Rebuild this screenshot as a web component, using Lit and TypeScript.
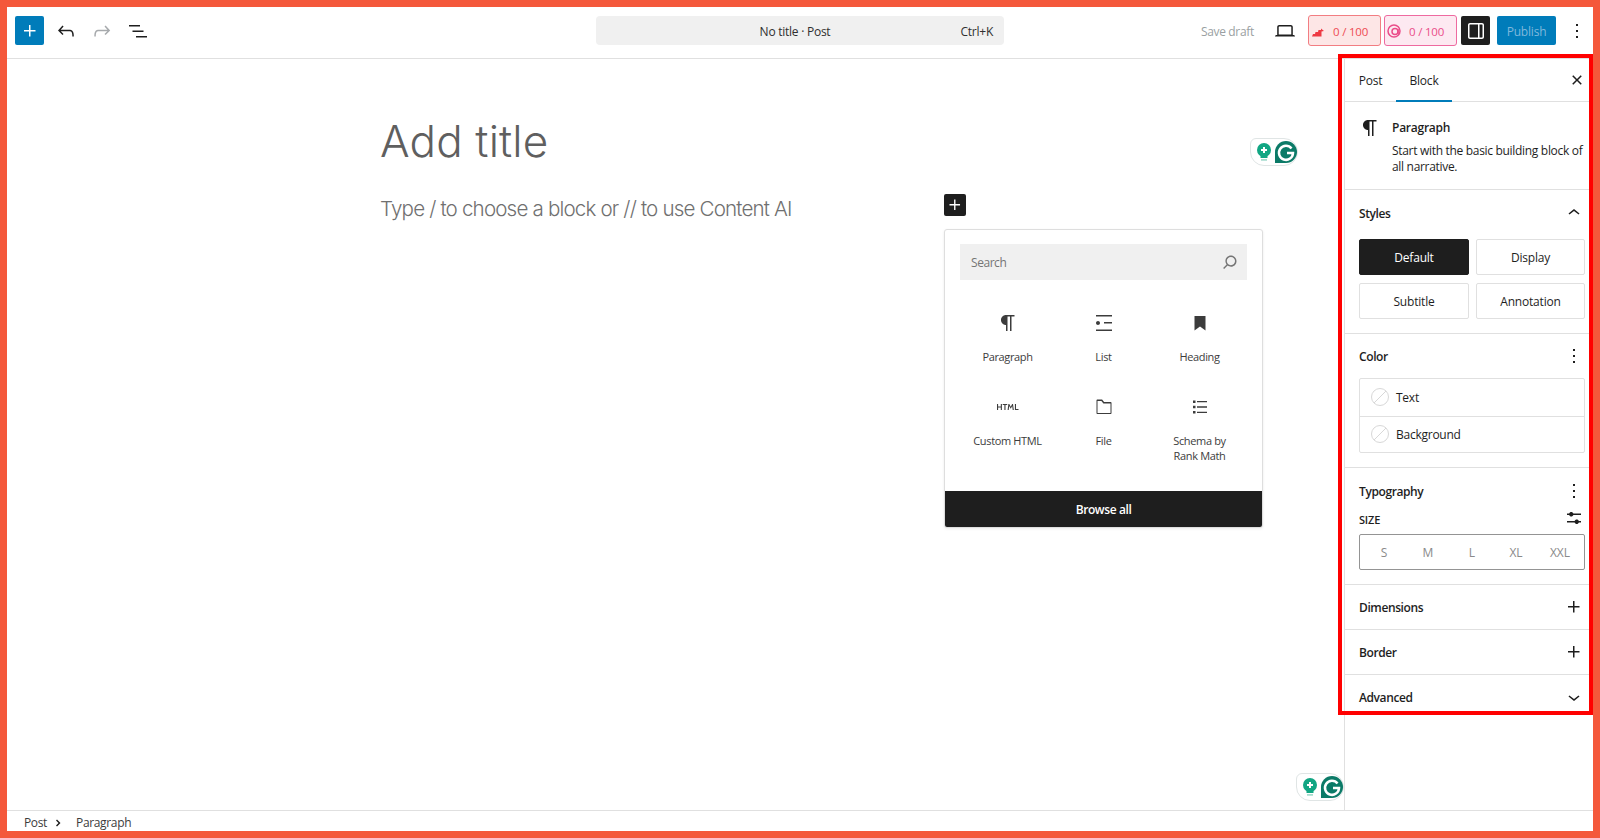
import { LitElement, html, css, svg } from "lit";
import { customElement } from "lit/decorators.js";

const P = {
  plus: "M11 12.5V17.5H12.5V12.5H17.5V11H12.5V6H11V11H6V12.5H11Z",
  undo: "M18.3 11.7c-.6-.6-1.4-.9-2.3-.9H6.7l2.9-3.3-1.1-1-4.5 5L8.5 16l1-1-2.7-2.7H16c.5 0 .9.2 1.3.5 1 1 1 3.4 1 4.5v.3h1.5v-.2c0-1.5 0-4.3-1.5-5.7z",
  redo: "M15.6 6.5l-1.1 1 2.9 3.3H8c-.9 0-1.7.3-2.3.9-1.4 1.5-1.4 4.2-1.4 5.6v.2h1.5v-.3c0-1.1 0-3.5 1-4.5.3-.3.7-.5 1.3-.5h9.2L14.5 15l1.1 1.1 4.6-4.6-4.6-5z",
  listView: "M3 6h11v1.5H3V6zm3.5 5.5h11V13h-11v-1.5zM21 17H10v1.5h11V17z",
  close: "M12 13.06l3.712 3.713 1.061-1.06L13.061 12l3.712-3.712-1.06-1.06L12 10.938 8.288 7.227l-1.061 1.06L10.939 12l-3.712 3.712 1.06 1.061L12 13.061z",
  more: "M13 19h-2v-2h2v2zm0-6h-2v-2h2v2zm0-6h-2V5h2v2z",
  up: "M6.5 12.4L12 8l5.5 4.4-.9 1.2L12 10l-4.5 3.6-1-1.2z",
  down: "M17.5 11.6L12 16l-5.5-4.4.9-1.2L12 14l4.5-3.6 1 1.2z",
  para: "m9.99609 14v-.2251l.00391.0001v6.225h1.5v-14.5h2.5v14.5h1.5v-14.5h3v-1.5h-8.50391c-2.76142 0-5 2.23858-5 5 0 2.7614 2.23858 5 5 5z",
  list: "M4 4v1.5h16V4H4zm8 8.5h8V11h-8v1.5zM4 20h16v-1.5H4V20zm4-8c0-1.1-.9-2-2-2s-2 .9-2 2 .9 2 2 2 2-.9 2-2z",
  heading: "M6.5 5h11v14.5L12 15.5l-5.5 4z",
  html: "M4.8 11.4H2.1V9H1v6h1.1v-2.6h2.7V15h1.1V9H4.8v2.4zm1.9-1.3h1.7V15h1.1v-4.9h1.7V9H6.7v1.1zM16.2 9l-1.5 2.7L13.3 9h-.9l-.8 6h1.1l.5-4 1.5 2.8 1.5-2.8.5 4h1.1L17 9h-.8zm3.8 5V9h-1.1v6h3.6v-1H20z",
  file: "M5.5 4.5h4.6l2 2.5h6.4c.6 0 1 .4 1 1v10c0 .6-.4 1-1 1h-13c-.6 0-1-.4-1-1V5.500c0-.6.4-1 1-1zm0 1.500v12h13V8.500h-7.100l-2-2.500z",
  schema: "M9 6h10v1.300H9zM9 11.350h10v1.300H9zM9 16.700h10V18H9zM5 5.500h2.500V8H5zM5 10.750h2.500v2.500H5zM5 16h2.500v2.500H5z",
  search: "M13 5c-3.3 0-6 2.7-6 6 0 1.4.5 2.7 1.3 3.7l-3.8 3.8 1.1 1.1 3.8-3.8c1 .8 2.3 1.3 3.7 1.3 3.3 0 6-2.7 6-6S16.3 5 13 5zm0 10.500c-2.500 0-4.500-2-4.500-4.500s2-4.500 4.500-4.500 4.500 2 4.500 4.500-2 4.500-4.500 4.500z",
  sliders: "m19 7.500h-7.628c-.3089-.87389-1.1423-1.500-2.122-1.500-.97966 0-1.81309.62611-2.12197 1.500h-2.12803v1.500h2.12803c.30888.87389 1.14231 1.500 2.12197 1.500.9797 0 1.8131-.62611 2.122-1.500h7.628zM19 15h-2.128c-.3089-.8739-1.1423-1.500-2.122-1.500s-1.8131.6261-2.122 1.500h-7.628v1.500h7.628c.3089.8739 1.1423 1.500 2.122 1.500s1.8131-.6261 2.122-1.500h2.128z",
  laptop: "M20.500 16h-.700V8c0-1.100-.900-2-2-2H6.200c-1.100 0-2 .900-2 2v8h-.700c-.800 0-1.500.700-1.500 1.500h20c0-.800-.700-1.500-1.500-1.500zM5.700 8c0-.300.200-.500.500-.500h11.600c.300 0 .500.200.500.500v7.600H5.700V8z",
  panel: "M18 4H6c-1.100 0-2 .900-2 2v12c0 1.100.900 2 2 2h12c1.100 0 2-.900 2-2V6c0-1.100-.900-2-2-2zm-4 14.500H6c-.300 0-.500-.200-.500-.500V6c0-.300.200-.500.500-.500h8v13zm4.500-.500c0 .300-.200.500-.500.500h-2.500v-13H18c.300 0 .500.200.500.500v12z",
};

const icon = (d: string, size = 24, cls = "") =>
  html`<svg class="ic ${cls}" width=${size} height=${size} viewBox="0 0 24 24" aria-hidden="true">${svg`<path d=${d}></path>`}</svg>`;

const bulb = svg`<g>
  <circle cx="11" cy="10" r="7" fill="#11a683"></circle>
  <path d="M7.500 15h7v3h-7z" fill="#11a683"></path>
  <path d="M8 19.200h6v1.400H8z" fill="#8ed3c1"></path>
  <path d="M10 7h2v2h2v2h-2v2h-2v-2H8V9h2z" fill="#fff"></path>
</g>`;

const grammarly = svg`<g transform="translate(-4 -1)">
  <path d="M37 2a11 11 0 1 1 0 22H26V13A11 11 0 0 1 37 2z" fill="#0b7a67"></path>
  <path d="M42.500 9.500A7 7 0 1 0 44 14h-6" fill="none" stroke="#fff" stroke-width="2.500"></path>
</g>`;

@customElement("gram-badge")
class GramBadge extends LitElement {
  static styles = css`
    :host { display: block; width: 48px; height: 28px; box-sizing: border-box; background: #fff; border: 1px solid #e0e5e5; border-radius: 6px 14px 14px 14px; }
    svg { display: block; margin: 1px 0 0 2px; }
  `;
  render() {
    return html`<svg width="48" height="26" viewBox="0 0 48 26">${bulb}${grammarly}</svg>`;
  }
}

@customElement("app-root")
export class AppRoot extends LitElement {
  static styles = css`
    :host { display: block; position: relative; width: 1600px; height: 838px; box-sizing: border-box; padding: 7px; background: #f4583b; font-family: "Open Sans", "Noto Sans", sans-serif; font-size: 12px; color: #1e1e1e; overflow: hidden; }
    .ic { display: block; fill: currentColor; flex: none; }
    .frame { display: flex; flex-direction: column; height: 100%; background: #fff; }

    .top { display: flex; align-items: center; height: 47px; padding-bottom: 4px; border-bottom: 1px solid #e0e0e0; flex: none; position: relative; }
    .tl { display: flex; align-items: center; padding-left: 8px; width: 581px; flex: none; }
    .add { width: 29px; height: 29px; background: #007cba; color: #fff; border-radius: 2px; display: flex; align-items: center; justify-content: center; }
    .tb { width: 24px; height: 24px; margin-left: 9px; }
    .tb.first { margin-left: 10px; }
    .tb.second { margin-left: 12px; }
    .tb.third { margin-left: 12px; }
    .muted { color: #a7aaad; }
    .cmd { width: 408px; height: 29px; flex: none; background: #f0f0f0; border-radius: 4px; display: flex; align-items: center; position: relative; justify-content: center; padding: 2px 10px 0 0; box-sizing: border-box; font-size: 12px; color: #2f2f2f; letter-spacing: -0.25px; }
    .cmd .k { position: absolute; right: 11px; }
    .tr { display: flex; align-items: center; flex: 1; min-width: 0; }
    .save { margin-left: 197px; padding-top: 2px; color: #9a9fa2; width: 52px; white-space: nowrap; letter-spacing: -0.35px; }
    .lap { margin-left: 20px; width: 24px; height: 24px; color: #1e1e1e; }
    .score { height: 31px; width: 73px; box-sizing: border-box; border-radius: 3px; display: flex; align-items: center; padding-left: 2px; margin-left: 3px; font-size: 11.500px; letter-spacing: -0.2px; }
    .score svg { flex: none; margin-right: 6px; }
    .score span { padding-top: 2px; }
    .score.rm { margin-left: 11px; background: #fde6e6; border: 1px solid #f27d82; color: #ee4a52; }
    .score.ci { background: #fde9f1; border: 1px solid #ee6aa0; color: #ea4c89; }
    .toggle { width: 29px; height: 29px; background: #1e1e1e; color: #fff; border-radius: 2px; margin-left: 4px; display: flex; align-items: center; justify-content: center; }
    .pub { width: 59px; height: 29px; box-sizing: border-box; padding-top: 2px; background: #007cba; color: #7fb8dc; border-radius: 2px; margin-left: 7px; display: flex; align-items: center; justify-content: center; letter-spacing: -0.2px; }
    .dots { margin-left: 9px; }

    .main { flex: 1; display: flex; min-height: 0; }
    .canvas { flex: 1; position: relative; min-width: 0; padding: 56px 0 0 373px; font-family: Inter, sans-serif; }
    .title { font-size: 44px; line-height: 52px; font-weight: 300; color: #5f5f5f; letter-spacing: 0.15px; }
    .ph { margin-top: 27px; font-size: 20.600px; line-height: 30px; font-weight: 300; color: #707070; letter-spacing: -0.84px; }

    .plus-b { position: absolute; left: 937px; top: 135px; width: 22px; height: 22px; background: #1e1e1e; color: #fff; border-radius: 2px; display: flex; align-items: center; justify-content: center; }
    .pop { position: absolute; left: 937px; top: 170px; width: 319px; height: 299px; box-sizing: border-box; background: #fff; border: 1px solid #dedede; border-radius: 3px; box-shadow: 0 1px 3px rgba(0,0,0,.08); display: flex; flex-direction: column; font-family: "Open Sans", "Noto Sans", sans-serif; overflow: hidden; }
    .search { margin: 14px 15px 0; height: 36px; background: #f0f0f0; display: flex; align-items: center; justify-content: space-between; padding: 0 6px 0 11px; color: #757575; font-size: 12px; letter-spacing: -0.45px; }
    .grid { flex: 1; display: grid; grid-template-columns: repeat(3, 96px); justify-content: center; grid-auto-rows: 84px; padding-top: 31px; box-sizing: border-box; }
    .item { display: flex; flex-direction: column; align-items: center; text-align: center; font-size: 11px; line-height: 14.500px; color: #3c3c3c; letter-spacing: -0.35px; }
    .item .ic { margin-bottom: 15px; }
    .item span { display: block; width: 70px; }
    .browse { height: 36px; background: #1e1e1e; color: #fff; display: flex; align-items: center; justify-content: center; font-weight: 600; letter-spacing: -0.4px; flex: none; }
    .g1 { position: absolute; left: 1243px; top: 79px; }
    .g2 { position: absolute; left: 1289px; top: 714px; }

    .side { width: 249px; flex: none; box-sizing: border-box; border-left: 1px solid #e0e0e0; }
    .tabs { height: 43px; box-sizing: border-box; border-bottom: 1px solid #e0e0e0; display: flex; align-items: stretch; position: relative; }
    .tab { display: flex; align-items: center; justify-content: center; box-sizing: border-box; height: 43px; padding-top: 1px; letter-spacing: -0.2px; color: #1e1e1e; border-bottom: 2px solid transparent; }
    .tab.post { width: 51px; }
    .tab.block { width: 56px; border-bottom-color: #007cba; }
    .x { margin-left: auto; margin-right: 4px; align-self: center; }
    .bc { height: 88px; box-sizing: border-box; border-bottom: 1px solid #e0e0e0; display: flex; padding: 14px 8px 0 14px; }
    .bc .ic { margin: 0 10px 0 -1px; width: 24px; }
    .bc b { display: block; font-weight: 600; line-height: 18px; margin-bottom: 6px; margin-top: 3px; letter-spacing: -0.25px; }
    .bc p { margin: 0; line-height: 16px; letter-spacing: -0.31px; color: #1e1e1e; white-space: nowrap; }
    .panel { box-sizing: border-box; border-bottom: 1px solid #e0e0e0; padding: 13px 8px 14px 14px; }
    .panel.last { border-bottom: none; }
    .panel.flat { height: 45px; padding-top: 12px; padding-bottom: 0; }
    .panel.c { padding-top: 12px; }
    .ph2 { display: flex; align-items: center; justify-content: space-between; height: 20px; font-weight: 600; letter-spacing: -0.4px; color: #1e1e1e; }
    .ph2 .ic { margin-right: -1px; }
    .styles { display: grid; grid-template-columns: 110px 109px; gap: 8px 7px; margin-top: 16px; }
    .st { height: 36px; box-sizing: border-box; border: 1px solid #e0e0e0; border-radius: 2px; display: flex; align-items: center; justify-content: center; letter-spacing: -0.2px; color: #1e1e1e; }
    .st.on { background: #1e1e1e; color: #fff; border-color: #1e1e1e; }
    .colors { margin-top: 12px; border: 1px solid #e0e0e0; border-radius: 2px; height: 75px; box-sizing: border-box; display: grid; grid-template-rows: 1fr 1fr; }
    .cr { display: flex; align-items: center; padding-left: 11px; gap: 7px; letter-spacing: -0.25px; }
    .cr + .cr { border-top: 1px solid #e0e0e0; }
    .sw { width: 16px; height: 16px; border: 1px solid #d8d8d8; border-radius: 50%; background: linear-gradient(-45deg, transparent 48%, #d8d8d8 48%, #d8d8d8 52%, transparent 52%); }
    .size { display: flex; align-items: center; justify-content: space-between; height: 20px; margin-top: 8px; padding-bottom: 1px; font-size: 11px; font-weight: 600; letter-spacing: -0.2px; }
    .size .ic { margin-right: -1px; margin-top: -3px; }
    .seg { margin-top: 4px; height: 36px; box-sizing: border-box; border: 1px solid #949494; border-radius: 2px; display: grid; grid-template-columns: repeat(5, 44px); padding: 0 2px; align-items: center; text-align: center; color: #8a8a8a; }

    .status { height: 21px; box-sizing: border-box; flex: none; border-top: 1px solid #e0e0e0; padding-top: 3px; display: flex; align-items: center; padding-left: 17px; color: #3c3c3c; letter-spacing: -0.35px; }
    .status svg { margin: 0 3px 0 6px; fill: #1e1e1e; }
    .crumb { margin-left: 8px; }

    .mark { position: absolute; left: 1338px; top: 54px; width: 255px; height: 661px; box-sizing: border-box; border: 4px solid #f00; pointer-events: none; }
  `;

  render() {
    const items: [string, string, number][] = [
      [P.para, "Paragraph", 24], [P.list, "List", 24], [P.heading, "Heading", 24],
      [P.html, "Custom HTML", 24], [P.file, "File", 24], [P.schema, "Schema by Rank Math", 24],
    ];
    return html`
      <div class="frame">
        <header class="top">
          <div class="tl">
            <div class="add">${icon(P.plus)}</div>
            <div class="tb first">${icon(P.undo)}</div>
            <div class="tb second muted">${icon(P.redo)}</div>
            <div class="tb third">${icon(P.listView)}</div>
          </div>
          <div class="cmd"><span>No title · Post</span><span class="k">Ctrl+K</span></div>
          <div class="tr">
            <div class="save">Save draft</div>
            <div class="lap">${icon(P.laptop)}</div>
            <div class="score rm">
              <svg width="16" height="16" viewBox="0 0 16 16" fill="#ee3a44"><path d="M1 13.500 2 11h2l.500-2H7l.500-2H10V5.500L13 8l-2.500.500v5z"></path></svg>
              <span>0 / 100</span>
            </div>
            <div class="score ci">
              <svg width="16" height="16" viewBox="0 0 16 16" fill="none" stroke="#ea4c89" stroke-width="1.500"><circle cx="7" cy="8" r="6"></circle><circle cx="8" cy="8.500" r="3"></circle><path d="M11 6v5"></path></svg>
              <span>0 / 100</span>
            </div>
            <div class="toggle">${icon(P.panel)}</div>
            <div class="pub">Publish</div>
            <div class="dots">${icon(P.more)}</div>
          </div>
        </header>
        <div class="main">
          <div class="canvas">
            <div class="title">Add title</div>
            <div class="ph">Type / to choose a block or // to use Content AI</div>
            <div class="plus-b">${icon(P.plus, 22)}</div>
            <div class="pop">
              <div class="search"><span>Search</span>${icon(P.search, 22)}</div>
              <div class="grid">
                ${items.map(([d, l, s]) => html`<div class="item">${icon(d, s)}<span>${l}</span></div>`)}
              </div>
              <div class="browse">Browse all</div>
            </div>
            <gram-badge class="g1"></gram-badge>
            <gram-badge class="g2"></gram-badge>
          </div>
          <aside class="side">
            <div class="tabs">
              <div class="tab post">Post</div>
              <div class="tab block">Block</div>
              <div class="x">${icon(P.close)}</div>
            </div>
            <div class="bc">
              ${icon(P.para)}
              <div><b>Paragraph</b><p>Start with the basic building block of<br />all narrative.</p></div>
            </div>
            <section class="panel">
              <div class="ph2">Styles ${icon(P.up)}</div>
              <div class="styles">
                <div class="st on">Default</div><div class="st">Display</div>
                <div class="st">Subtitle</div><div class="st">Annotation</div>
              </div>
            </section>
            <section class="panel c">
              <div class="ph2">Color ${icon(P.more)}</div>
              <div class="colors">
                <div class="cr"><i class="sw"></i>Text</div>
                <div class="cr"><i class="sw"></i>Background</div>
              </div>
            </section>
            <section class="panel">
              <div class="ph2">Typography ${icon(P.more)}</div>
              <div class="size"><span>SIZE</span>${icon(P.sliders)}</div>
              <div class="seg"><span>S</span><span>M</span><span>L</span><span>XL</span><span>XXL</span></div>
            </section>
            <section class="panel flat"><div class="ph2">Dimensions ${icon(P.plus)}</div></section>
            <section class="panel flat"><div class="ph2">Border ${icon(P.plus)}</div></section>
            <section class="panel flat last"><div class="ph2">Advanced ${icon(P.down)}</div></section>
          </aside>
        </div>
        <footer class="status">
          <span>Post</span>
          <svg width="12" height="12" viewBox="0 0 12 12"><path d="M4 2.500L7.500 6 4 9.500 3 8.500 5.500 6 3 3.500z"></path></svg>
          <span class="crumb">Paragraph</span>
        </footer>
      </div>
      <div class="mark"></div>
    `;
  }
}
